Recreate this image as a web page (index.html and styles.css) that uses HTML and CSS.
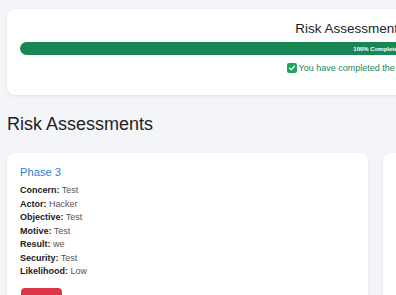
FILE: index.html
```html
<!DOCTYPE html>
<html lang="en">
<head>
<meta charset="utf-8">
<title>Risk Assessments</title>
<link rel="stylesheet" href="styles.css">
</head>
<body>
<div class="page">
  <section class="progress-card">
    <h2 class="progress-title">Risk Assessment Progress</h2>
    <div class="bar">
      <div class="bar-fill" style="width: 100%">100% Complete</div>
    </div>
    <p class="done">
      <span class="check"><svg viewBox="0 0 10 10" width="8" height="8"><path d="M2 5.2 L4.2 7.2 L8 2.8" fill="none" stroke="#fff" stroke-width="1.6" stroke-linecap="round" stroke-linejoin="round"/></svg></span>
      <span>You have completed the risk assessment.</span>
    </p>
  </section>

  <h1 class="heading">Risk Assessments</h1>

  <div class="grid">
    <article class="card">
      <h3 class="card-title">Phase 3</h3>
      <ul class="fields">
        <li><b>Concern:</b> Test</li>
        <li><b>Actor:</b> Hacker</li>
        <li><b>Objective:</b> Test</li>
        <li><b>Motive:</b> Test</li>
        <li><b>Result:</b> we</li>
        <li><b>Security:</b> Test</li>
        <li><b>Likelihood:</b> Low</li>
      </ul>
      <button class="btn-delete" type="button">Delete</button>
    </article>
    <article class="card">
      <h3 class="card-title">Phase 2</h3>
      <ul class="fields">
        <li><b>Concern:</b> Test</li>
        <li><b>Actor:</b> Hacker</li>
        <li><b>Objective:</b> Test</li>
        <li><b>Motive:</b> Test</li>
        <li><b>Result:</b> Test</li>
        <li><b>Security:</b> Test</li>
        <li><b>Likelihood:</b> Low</li>
      </ul>
      <button class="btn-delete" type="button">Delete</button>
    </article>
  </div>
</div>
</body>
</html>
```

FILE: styles.css
```css
html, body {
  margin: 0;
  padding: 0;
  overflow: hidden;
}
body {
  background: #f4f5f8;
  font-family: "Liberation Sans", Arial, sans-serif;
  color: #212529;
}
.page {
  width: 737px;
  padding: 9px 0 0 7px;
}
.progress-card {
  background: #fff;
  border-radius: 8px;
  box-shadow: 0 1px 4px rgba(0, 0, 0, 0.08);
  padding: 12px 13px 21px;
}
.progress-title {
  margin: 0 0 5px;
  font-size: 13.5px;
  line-height: 16px;
  font-weight: 400;
  text-align: center;
  color: #222;
}
.bar {
  height: 13px;
  border-radius: 7px;
  background: #e9ecef;
  overflow: hidden;
  display: flex;
}
.bar-fill {
  background: #198754;
  color: #fff;
  font-size: 6px;
  font-weight: 700;
  display: flex;
  align-items: center;
  justify-content: center;
}
.done {
  margin: 7px 0 0;
  display: flex;
  justify-content: center;
  align-items: center;
  gap: 2px;
  font-size: 9px;
  line-height: 12px;
  color: #198754;
}
.check {
  width: 10px;
  height: 10px;
  border-radius: 2px;
  background: #22a45d;
  display: flex;
  align-items: center;
  justify-content: center;
}
.heading {
  margin: 19px 0 18px;
  font-size: 18px;
  line-height: 21px;
  font-weight: 400;
  color: #222;
}
.grid {
  display: grid;
  grid-template-columns: 1fr 1fr;
  gap: 15px;
}
.card {
  background: #fff;
  border-radius: 8px;
  box-shadow: 0 1px 4px rgba(0, 0, 0, 0.07);
  padding: 13px 13px 14px;
}
.card-title {
  margin: 0 0 5px;
  font-size: 11.2px;
  line-height: 13px;
  font-weight: 400;
  color: #2f7fd3;
}
.fields {
  list-style: none;
  margin: 0 0 9px;
  padding: 0;
  font-size: 9px;
  line-height: 13.5px;
  color: #555;
}
.fields b {
  color: #222;
  font-weight: 700;
}
.btn-delete {
  display: block;
  width: 41px;
  margin-left: 1px;
  border: 0;
  border-radius: 4px;
  background: #dc3545;
  color: #fff;
  font-family: inherit;
  font-size: 9px;
  padding: 6px 0;
}
```
